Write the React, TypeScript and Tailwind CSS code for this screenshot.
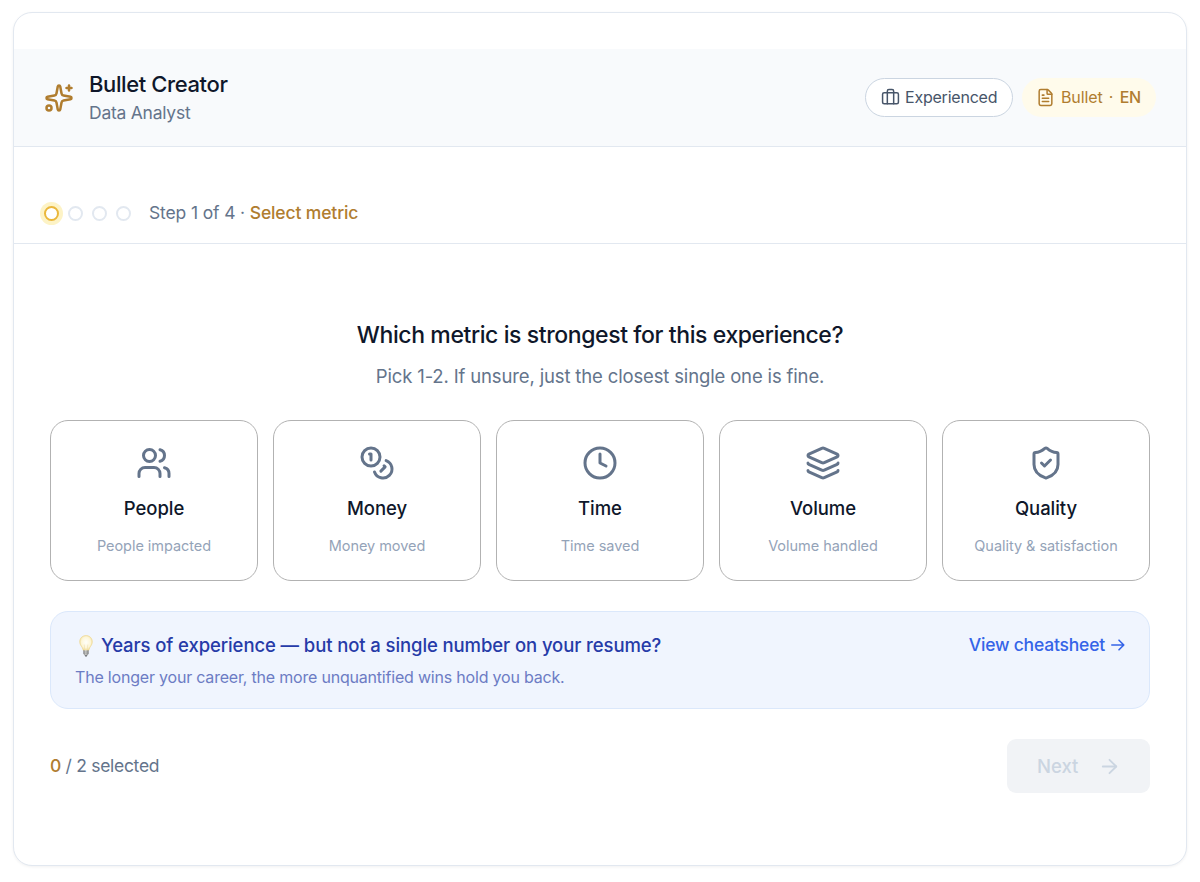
import React from 'react';
import { ArrowRight, Briefcase, Clock, Coins, FileText, Layers, ShieldCheck, Sparkles, Users } from 'lucide-react';

const metrics = [
  { icon: Users, name: 'People', hint: 'People impacted' },
  { icon: Coins, name: 'Money', hint: 'Money moved' },
  { icon: Clock, name: 'Time', hint: 'Time saved' },
  { icon: Layers, name: 'Volume', hint: 'Volume handled' },
  { icon: ShieldCheck, name: 'Quality', hint: 'Quality & satisfaction' },
];

function Bulb() {
  return (
    <svg className="h-[22px] w-[14px] shrink-0" viewBox="0 0 14 22" fill="none">
      <defs>
        <radialGradient id="glass" cx="0.5" cy="0.45" r="0.6">
          <stop offset="0" stopColor="#fffffa" />
          <stop offset="0.6" stopColor="#fdf6d8" />
          <stop offset="1" stopColor="#efd682" />
        </radialGradient>
        <linearGradient id="base" x1="0" x2="1" y1="0" y2="0">
          <stop offset="0" stopColor="#77777a" />
          <stop offset="0.45" stopColor="#d8d8d4" />
          <stop offset="1" stopColor="#77777a" />
        </linearGradient>
      </defs>
      <path d="M7 .6C3.3.6.7 3.3.7 6.7c0 2.6 1.4 4 2.4 5.8.6 1 .7 2.2 1.3 3h5.2c.6-.8.7-2 1.3-3 1-1.8 2.4-3.2 2.4-5.8C13.3 3.3 10.7.6 7 .6Z" fill="url(#glass)" stroke="#ecd58c" strokeWidth=".6" />
      <path d="M5.8 15 5.2 9.5M8.2 15l.6-5.5" stroke="#ead9a8" strokeWidth=".5" />
      <path d="M4.4 15.3h5.2v3.5l-1.2 1.4H5.6l-1.2-1.4Z" fill="url(#base)" />
      <path d="M5.6 20.2h2.8L7.7 21.500H6.300Z" fill="#55565a" />
      <path d="M4.4 17h5.2M4.7 18.8h4.6" stroke="#8b8c8e" strokeWidth=".5" />
    </svg>
  );
}

export default function App() {
  return (
    <div className="h-[882px] bg-white pt-3 pl-[13px] font-['Inter',sans-serif] text-[#64748b]">
      <main className="flex h-[854px] w-[1174px] flex-col overflow-hidden rounded-[19px] border border-[#e2e8f0] bg-white pt-9 shadow-[0_1px_3px_rgba(15,23,42,0.06)]">
        <header className="flex h-[98px] shrink-0 items-center justify-between border-b border-[#e2e8f0] bg-[#f8fafc] px-[30px]">
          <div className="flex items-center gap-[15px]">
            <Sparkles size={30} strokeWidth={2} className="text-[#b07d2f]" />
            <div className="pb-px">
              <h1 className="text-[22px] leading-[30px] font-medium tracking-[-0.39px] text-[#0f172a]">Bullet Creator</h1>
              <p className="text-[17.5px] leading-[27px] tracking-[-0.25px]">Data Analyst</p>
            </div>
          </div>
          <div className="flex items-center gap-[9px]">
            <span className="flex h-[39px] w-[148px] items-center gap-[5px] rounded-full border border-[#cbd5e1] bg-white pl-[15px] text-[16px] tracking-[-0.22px] text-[#475569]">
              <Briefcase size={19} strokeWidth={1.9} />
              <span className="pb-0.5">Experienced</span>
            </span>
            <span className="flex h-[39px] w-[134px] items-center rounded-full bg-[#fffbeb] pl-[14px] text-[16px] text-[#b07d2f]">
              <FileText size={19} strokeWidth={1.9} className="mr-[6px]" />
              <span className="pb-0.5 tracking-[-0.1px]">Bullet</span>
              <span className="w-[17px] pb-0.5 text-center">·</span>
              <span className="pb-0.5 font-medium tracking-[-0.2px]">EN</span>
            </span>
          </div>
        </header>

        <nav className="flex h-[97px] shrink-0 items-end border-b border-[#e2e8f0] pb-4 pl-[30px]">
          <div className="flex h-[28px] items-center gap-[9px]">
            <i className="size-[15px] rounded-full border-2 border-[#eab73b] bg-white ring-4 ring-[#fdf3c6]" />
            <i className="size-[15px] rounded-full border-2 border-[#e2e8f0]" />
            <i className="size-[15px] rounded-full border-2 border-[#e2e8f0]" />
            <i className="size-[15px] rounded-full border-2 border-[#e2e8f0]" />
            <p className="ml-[9px] text-[17.5px] leading-[28px] tracking-[-0.14px]">
              Step 1 of 4 · <span className="font-medium text-[#b07d2f]">Select metric</span>
            </p>
          </div>
        </nav>

        <section className="flex flex-col px-9 pt-[73px]">
          <h2 className="text-center text-[23px] leading-9 font-medium tracking-[-0.4px] text-[#0f172a]">
            Which metric is strongest for this experience?
          </h2>
          <p className="mt-2 text-center text-[18.5px] leading-[30px] tracking-[-0.15px]">
            Pick 1-2. If unsure, just the closest single one is fine.
          </p>
          <div className="mt-[29px] grid grid-cols-5 gap-[15px]">
            {metrics.map(({ icon: Icon, name, hint }) => (
              <button key={name} className="flex h-[161px] flex-col items-center rounded-[18px] border border-[#b2b2b2] bg-white pt-6">
                <Icon size={36} strokeWidth={2} />
                <span className="mt-[13px] text-[18.5px] leading-[28px] font-medium tracking-[-0.05px] text-[#0f172a]">{name}</span>
                <span className="mt-[13px] text-[14.5px] leading-[22px] tracking-[-0.04px] text-[#94a3b8]">{hint}</span>
              </button>
            ))}
          </div>

          <aside className="mt-[30px] flex h-[98px] justify-between rounded-[18px] border border-[#dbe8fb] bg-[#f0f5fe] px-[24px] pt-[19px]">
            <div>
              <p className="flex h-[29px] items-center gap-[8px] pl-1 text-[18.5px] font-medium tracking-[-0.1px] text-[#263ba8]">
                <Bulb />
                Years of experience — but not a single number on your resume?
              </p>
              <p className="mt-[5px] text-[16px] leading-[24px] tracking-[-0.2px] text-[#6c7cc4]">
                The longer your career, the more unquantified wins hold you back.
              </p>
            </div>
            <a className="flex h-[28px] items-center gap-[6px] text-[17.5px] font-medium tracking-[-0.2px] text-[#3564e8]">
              View cheatsheet
              <svg className="h-3 w-[14px]" viewBox="0 0 14 12" fill="none" stroke="currentColor" strokeWidth="1.6" strokeLinecap="round" strokeLinejoin="round">
                <path d="M.8 6h12M8 1.200 12.800 6 8 10.800" />
              </svg>
            </a>
          </aside>

          <footer className="mt-[30px] flex h-[54px] items-center justify-between">
            <p className="text-[17.5px] tracking-[-0.3px]">
              <span className="font-medium text-[#b07d2f]">0</span> / 2 selected
            </p>
            <button className="flex h-[54px] w-[143px] items-center gap-[20px] rounded-[9px] bg-[#f1f3f6] pl-[30px] text-[18.5px] font-medium text-[#cbd5e1]">
              <span className="pt-px">Next</span>
              <ArrowRight size={23} strokeWidth={1.9} />
            </button>
          </footer>
        </section>
      </main>
    </div>
  );
}
